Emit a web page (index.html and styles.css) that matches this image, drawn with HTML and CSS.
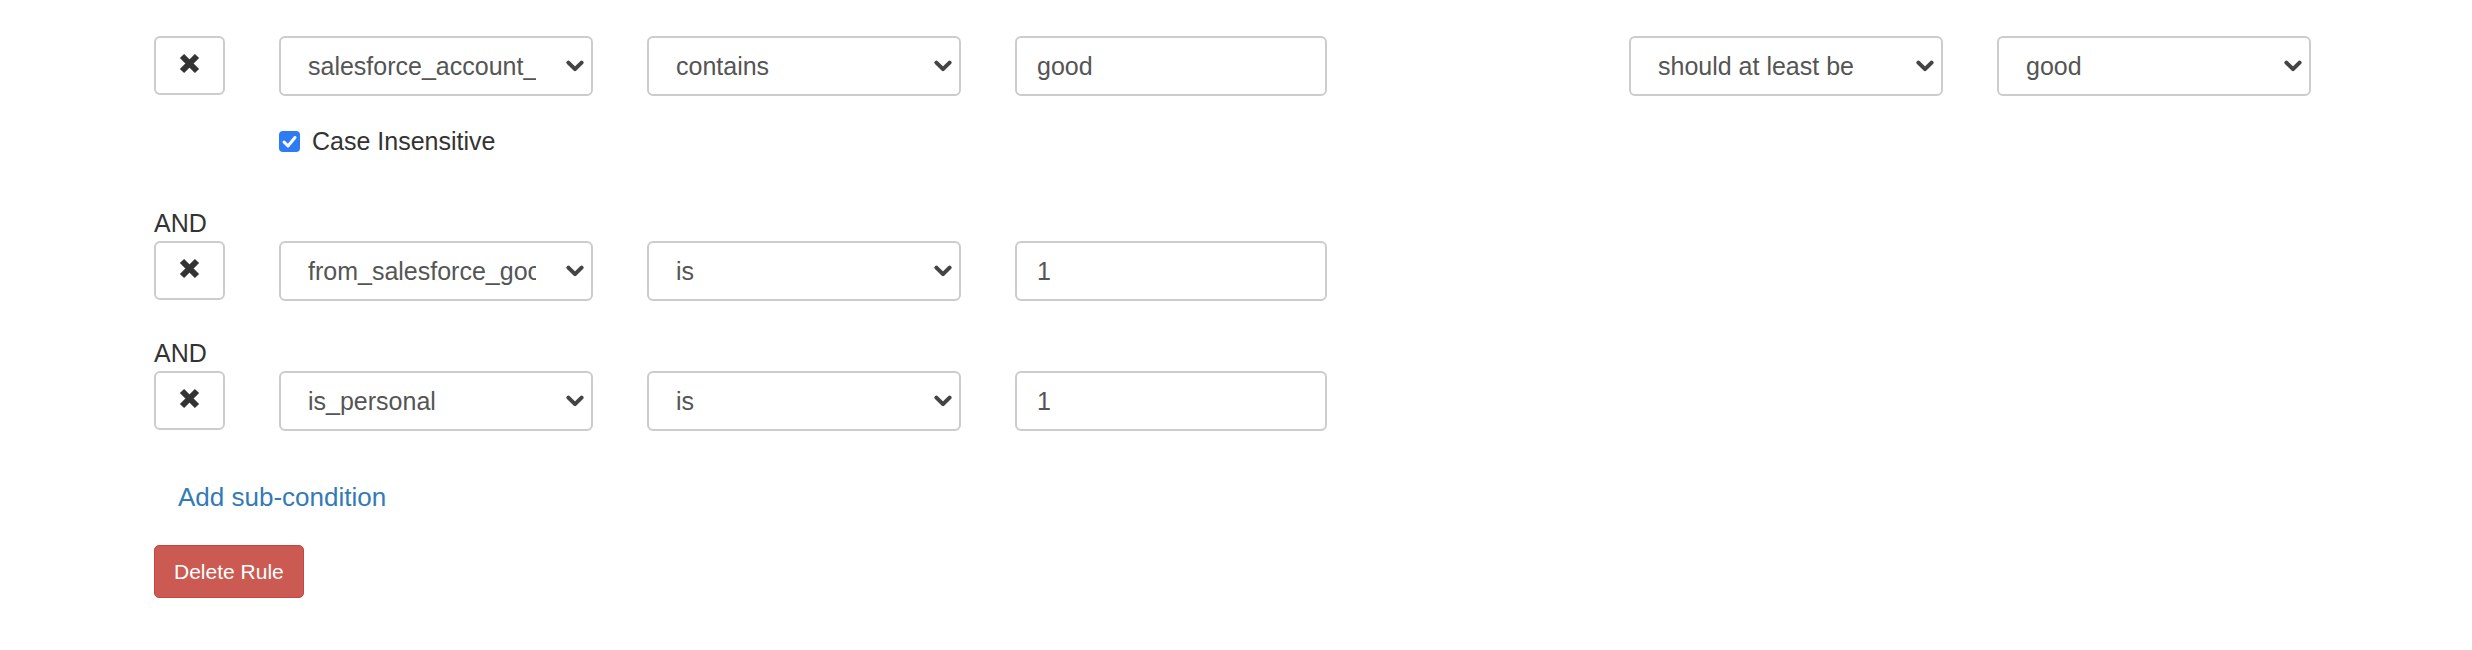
FILE: index.html
```html
<!DOCTYPE html>
<html>
<head>
<meta charset="utf-8">
<title>Rule</title>
<link rel="stylesheet" href="styles.css">
</head>
<body>
<div class="rule">
  <div class="cond">
    <div class="cond-row">
      <button class="remove" type="button"><svg class="x" viewBox="0 0 21 21" width="21" height="21"><path d="M3 3L18 18M18 3L3 18" stroke="#333" stroke-width="6" fill="none"/></svg></button>
      <div class="field-col">
        <div class="select-wrap">
          <select class="sel"><option>salesforce_account_grade</option></select>
          <svg class="chev" viewBox="0 0 18 12" width="18" height="12"><path d="M2.4 2.6L9 9.2L15.6 2.6" fill="none" stroke="#444" stroke-width="4" stroke-linecap="round" stroke-linejoin="round"/></svg>
        </div>
        <label class="ci"><span class="cb"><svg viewBox="0 0 21 21" width="21" height="21"><path d="M5 11L9 15L16 6.5" fill="none" stroke="#fff" stroke-width="3" stroke-linecap="round" stroke-linejoin="round"/></svg></span>Case Insensitive</label>
      </div>
      <div class="select-wrap">
        <select class="sel"><option>contains</option></select>
        <svg class="chev" viewBox="0 0 18 12" width="18" height="12"><path d="M2.4 2.6L9 9.2L15.6 2.6" fill="none" stroke="#444" stroke-width="4" stroke-linecap="round" stroke-linejoin="round"/></svg>
      </div>
      <input class="inp" type="text" value="good">
      <div class="select-wrap push">
        <select class="sel"><option>should at least be</option></select>
        <svg class="chev" viewBox="0 0 18 12" width="18" height="12"><path d="M2.4 2.6L9 9.2L15.6 2.6" fill="none" stroke="#444" stroke-width="4" stroke-linecap="round" stroke-linejoin="round"/></svg>
      </div>
      <div class="select-wrap">
        <select class="sel"><option>good</option></select>
        <svg class="chev" viewBox="0 0 18 12" width="18" height="12"><path d="M2.4 2.6L9 9.2L15.6 2.6" fill="none" stroke="#444" stroke-width="4" stroke-linecap="round" stroke-linejoin="round"/></svg>
      </div>
    </div>
  </div>

  <div class="cond">
    <div class="and">AND</div>
    <div class="cond-row">
      <button class="remove" type="button"><svg class="x" viewBox="0 0 21 21" width="21" height="21"><path d="M3 3L18 18M18 3L3 18" stroke="#333" stroke-width="6" fill="none"/></svg></button>
      <div class="select-wrap">
        <select class="sel"><option>from_salesforce_good</option></select>
        <svg class="chev" viewBox="0 0 18 12" width="18" height="12"><path d="M2.4 2.6L9 9.2L15.6 2.6" fill="none" stroke="#444" stroke-width="4" stroke-linecap="round" stroke-linejoin="round"/></svg>
      </div>
      <div class="select-wrap">
        <select class="sel"><option>is</option></select>
        <svg class="chev" viewBox="0 0 18 12" width="18" height="12"><path d="M2.4 2.6L9 9.2L15.6 2.6" fill="none" stroke="#444" stroke-width="4" stroke-linecap="round" stroke-linejoin="round"/></svg>
      </div>
      <input class="inp" type="text" value="1">
    </div>
  </div>

  <div class="cond">
    <div class="and">AND</div>
    <div class="cond-row">
      <button class="remove" type="button"><svg class="x" viewBox="0 0 21 21" width="21" height="21"><path d="M3 3L18 18M18 3L3 18" stroke="#333" stroke-width="6" fill="none"/></svg></button>
      <div class="select-wrap">
        <select class="sel"><option>is_personal</option></select>
        <svg class="chev" viewBox="0 0 18 12" width="18" height="12"><path d="M2.4 2.6L9 9.2L15.6 2.6" fill="none" stroke="#444" stroke-width="4" stroke-linecap="round" stroke-linejoin="round"/></svg>
      </div>
      <div class="select-wrap">
        <select class="sel"><option>is</option></select>
        <svg class="chev" viewBox="0 0 18 12" width="18" height="12"><path d="M2.4 2.6L9 9.2L15.6 2.6" fill="none" stroke="#444" stroke-width="4" stroke-linecap="round" stroke-linejoin="round"/></svg>
      </div>
      <input class="inp" type="text" value="1">
    </div>
  </div>

  <a class="add" href="#">Add sub-condition</a>
  <div class="actions"><button class="delete" type="button">Delete Rule</button></div>
</div>
</body>
</html>
```
FILE: styles.css
```css
body {
  margin: 0;
  background: #fff;
  font-family: "Liberation Sans", Arial, Helvetica, sans-serif;
  color: #333;
}

.rule {
  padding: 36px 0 40px 154px;
}

.cond + .cond {
  margin-top: 34px;
}

.cond-row {
  display: flex;
  align-items: flex-start;
  gap: 54px;
}

.remove {
  width: 71px;
  height: 59px;
  box-sizing: border-box;
  margin: 0;
  padding: 0 0 4px;
  border: 2px solid #cccccc;
  border-radius: 6px;
  background: #fff;
  display: flex;
  align-items: center;
  justify-content: center;
}

.x {
  display: block;
}

.field-col {
  display: flex;
  flex-direction: column;
}

.select-wrap {
  position: relative;
  width: 314px;
  height: 60px;
  flex: none;
}

.sel {
  -webkit-appearance: none;
  appearance: none;
  display: block;
  width: 100%;
  height: 100%;
  box-sizing: border-box;
  margin: 0;
  padding: 0 55px 0 27px;
  border: 2px solid #cccccc;
  border-radius: 6px;
  background: #fff;
  font-family: "Liberation Sans", Arial, Helvetica, sans-serif;
  font-size: 25px;
  color: #555;
  outline: none;
}

.chev {
  position: absolute;
  right: 9px;
  top: 50%;
  margin-top: -6px;
  pointer-events: none;
}

.inp {
  flex: none;
  width: 312px;
  height: 60px;
  box-sizing: border-box;
  margin: 0;
  padding: 0 20px;
  border: 2px solid #cccccc;
  border-radius: 6px;
  background: #fff;
  font-family: "Liberation Sans", Arial, Helvetica, sans-serif;
  font-size: 25px;
  color: #555;
  outline: none;
}

.push {
  margin-left: 248px;
}

.ci {
  display: flex;
  align-items: center;
  gap: 12px;
  margin-top: 27px;
  margin-bottom: 12px;
  font-size: 25px;
  line-height: 36px;
  color: #333;
}

.cb {
  width: 21px;
  height: 21px;
  border-radius: 4px;
  background: #2d7cf4;
  display: flex;
  flex: none;
}

.and {
  font-size: 25px;
  line-height: 36px;
  color: #333;
}

.add {
  display: block;
  margin-top: 48px;
  padding-left: 24px;
  font-size: 26px;
  line-height: 36px;
  color: #337ab7;
  text-decoration: none;
}

.actions {
  margin-top: 30px;
}

.delete {
  height: 53px;
  box-sizing: border-box;
  margin: 0;
  padding: 0 19px;
  border: 1px solid #c4463f;
  border-radius: 5px;
  background: #cb5a52;
  color: #fff;
  font-family: "Liberation Sans", Arial, Helvetica, sans-serif;
  font-size: 21px;
}
```
